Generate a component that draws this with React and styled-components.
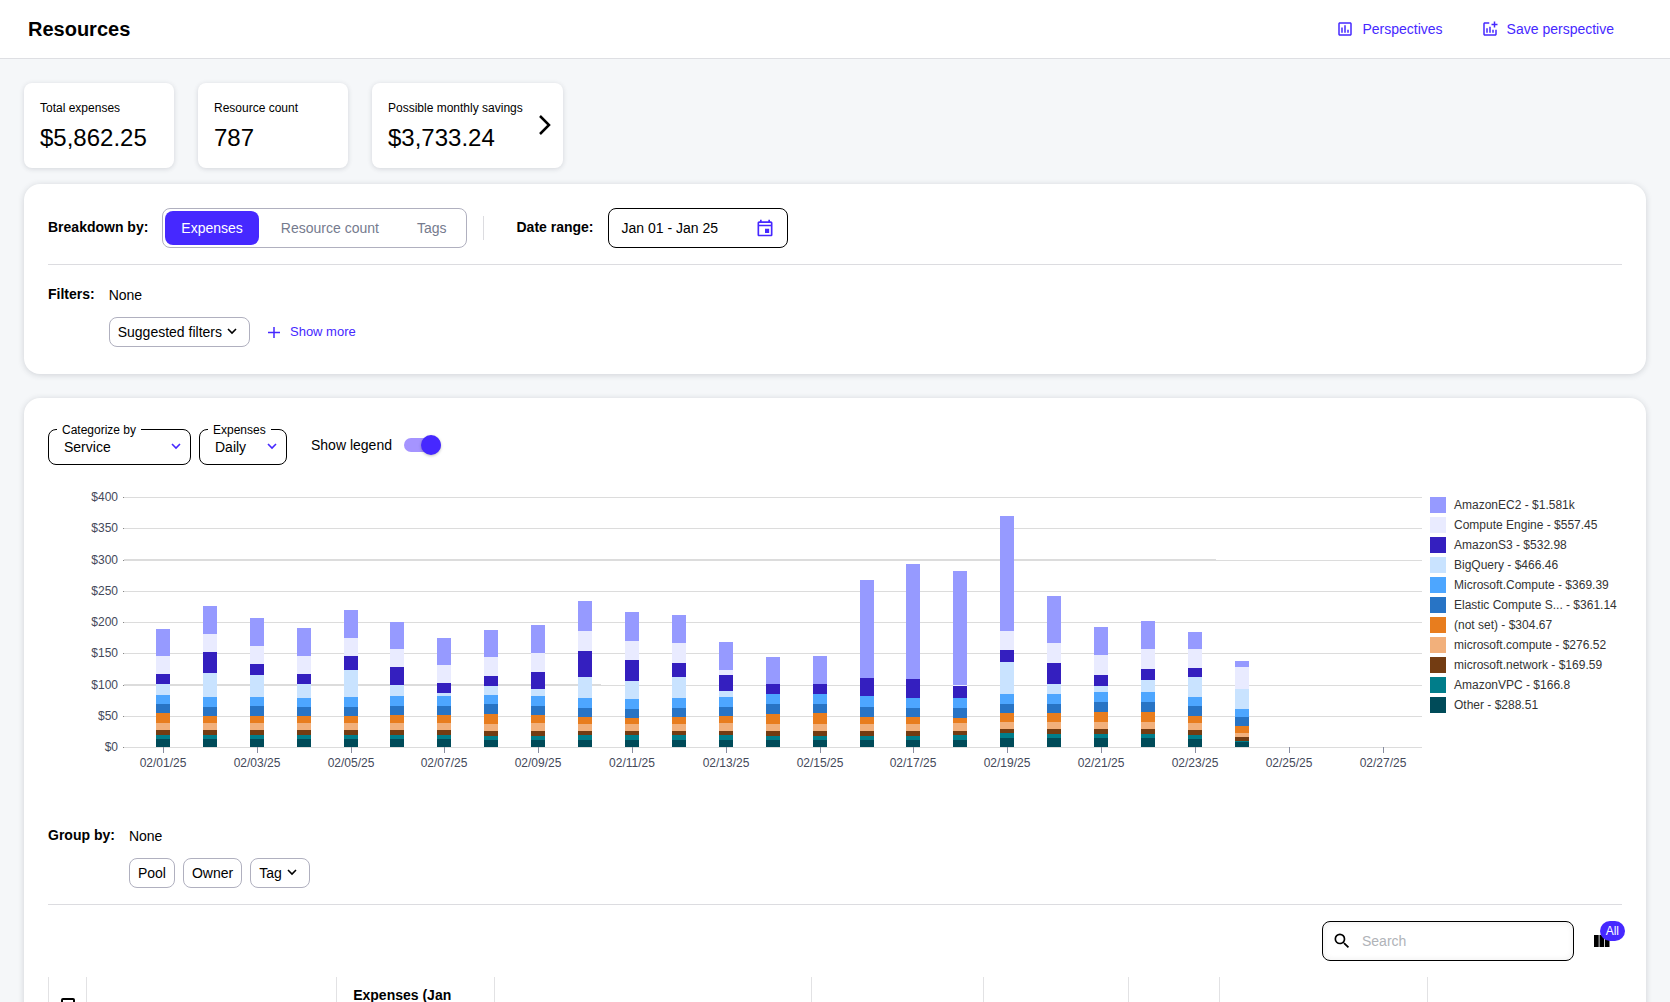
import React, { useLayoutEffect, useRef, useState } from 'react';
import styled, { createGlobalStyle } from 'styled-components';

const ACCENT = '#4628ff';
const LINE = '#dcdce0';

const GlobalStyle = createGlobalStyle`
  * { box-sizing: border-box; }
  body {
    margin: 0;
    background: #f5f7f9;
    color: #000;
    font-family: "Liberation Sans", Arial, sans-serif;
    font-size: 14px;
    line-height: 20px;
    overflow: hidden;
  }
  button, input, select { font: inherit; color: inherit; }
  button { cursor: pointer; }
`;

const Header = styled.header`
  display: flex;
  align-items: center;
  justify-content: space-between;
  height: 59px;
  padding: 0 56px 0 28px;
  background: #fff;
  border-bottom: 1px solid #dedfe3;
`;

const Title = styled.h1`
  margin: 0;
  font-size: 20px;
  line-height: 24px;
`;

const HeaderActions = styled.nav`
  display: flex;
  gap: 38px;
`;

const TextButton = styled.button`
  display: inline-flex;
  align-items: center;
  gap: 8px;
  padding: 0;
  border: 0;
  background: none;
  color: ${ACCENT};
  font-size: ${({ $small }) => ($small ? 13 : 14)}px;
`;

const Icon = styled.svg`
  display: block;
  flex: none;
  width: ${({ $size }) => $size || 18}px;
  height: ${({ $size }) => $size || 18}px;
  fill: currentColor;
`;

const Main = styled.main`
  padding: 24px;
`;

const Summary = styled.section`
  display: flex;
  gap: 24px;
  margin-bottom: 16px;
`;

const SummaryCard = styled.div`
  display: flex;
  align-items: center;
  justify-content: space-between;
  min-width: 150px;
  height: 85px;
  padding: 0 6px 0 16px;
  border-radius: 8px;
  background: #fff;
  box-shadow: 0 1px 5px rgba(40, 44, 60, 0.16);
`;

const SummaryLabel = styled.div`
  font-size: 12px;
  line-height: 16px;
`;

const SummaryValue = styled.div`
  margin-top: 8px;
  font-size: 24px;
  line-height: 28px;
`;

const CardLink = styled.a`
  display: block;
  margin-left: 10px;
  color: #000;
`;

const Panel = styled.section`
  padding: 24px;
  margin-bottom: 24px;
  border-radius: 16px;
  background: #fff;
  box-shadow: 0 1px 6px rgba(40, 44, 60, 0.18);
`;

const FilterPanel = styled(Panel)`
  padding-bottom: 27px;
`;

const Row = styled.div`
  display: flex;
  align-items: ${({ $align }) => $align || 'center'};
  gap: ${({ $gap }) => $gap || 0}px;
`;

const Label = styled.span`
  display: block;
  padding-bottom: 2px;
  font-weight: 700;
  line-height: 18px;
`;

const Toggle = styled.div`
  display: flex;
  gap: 6px;
  height: 40px;
  padding: 2px 4px 2px 2px;
  margin-left: 14px;
  border: 1px solid #b0b0bf;
  border-radius: 8px;
`;

const ToggleButton = styled.button`
  padding: 0 16px;
  border: 0;
  border-radius: 8px;
  background: ${({ $active }) => ($active ? ACCENT : 'transparent')};
  color: ${({ $active }) => ($active ? '#fff' : '#757b8e')};
`;

const VerticalRule = styled.span`
  width: 1px;
  height: 24px;
  margin: 0 32px 0 16px;
  background: ${LINE};
`;

const DateButton = styled.button`
  display: flex;
  align-items: center;
  justify-content: space-between;
  width: 180px;
  height: 40px;
  padding: 0 12px 0 13px;
  margin-left: 14px;
  border: 1px solid #000;
  border-radius: 8px;
  background: #fff;
  svg { color: ${ACCENT}; }
`;

const Rule = styled.hr`
  height: 1px;
  margin: 16px 0;
  border: 0;
  background: ${LINE};
`;

const Stack = styled.div`
  display: flex;
  flex-direction: column;
  gap: 12px;
  padding-top: 4px;
`;

const Chip = styled.button`
  display: inline-flex;
  align-items: center;
  gap: 4px;
  height: 30px;
  padding: 0 8px;
  border: 1px solid #b0b0bf;
  border-radius: 8px;
  background: #fff;
  svg { margin-right: 3px; }
`;

const ChartPanel = styled(Panel)`
  padding-top: 27px;
`;

const Controls = styled(Row)`
  height: 40px;
`;

const Field = styled.fieldset`
  position: relative;
  width: ${({ $width }) => $width}px;
  height: 39px;
  min-width: 0;
  margin: 0;
  padding: 0;
  border: 1px solid #000;
  border-radius: 8px;
`;

const Legend = styled.legend`
  margin-left: 8px;
  padding: 0 5px;
  font-size: 12px;
  line-height: 8px;
`;

const Select = styled.select`
  display: block;
  width: 100%;
  height: 26px;
  padding: 0 15px;
  border: 0;
  background: transparent;
  appearance: none;
`;

const SelectArrow = styled.span`
  position: absolute;
  right: 8px;
  bottom: 11px;
  color: ${ACCENT};
  pointer-events: none;
`;

const SwitchLabel = styled.label`
  display: flex;
  align-items: center;
  gap: 12px;
  margin-left: 16px;
`;

const Switch = styled.input`
  appearance: none;
  display: flex;
  align-items: center;
  justify-content: flex-end;
  width: 37px;
  height: 14px;
  margin: 0;
  border-radius: 7px;
  background: #a594ff;
  &::before {
    content: "";
    width: 20px;
    height: 20px;
    border-radius: 50%;
    background: ${ACCENT};
    box-shadow: 0 1px 3px rgba(0, 0, 0, 0.25);
  }
`;

const ChartRow = styled.div`
  display: flex;
  gap: 8px;
  margin-top: 25px;
`;

const Plot = styled.div`
  flex: 1;
  min-width: 0;
  height: 332px;
  svg { display: block; font-size: 12px; }
  text { fill: #44495a; }
`;

const LegendList = styled.ul`
  width: 192px;
  margin: 7px 0 0;
  padding: 0;
  list-style: none;
  color: #333;
  font-size: 12px;
  line-height: 16px;
`;

const LegendItem = styled.li`
  display: flex;
  gap: 8px;
  margin-bottom: 4px;
  &::before {
    content: "";
    width: 16px;
    height: 16px;
    background: ${({ $color }) => $color};
  }
`;

const Toolbar = styled.div`
  display: flex;
  align-items: center;
  justify-content: flex-end;
  gap: 20px;
  height: 40px;
  margin-bottom: 16px;
`;

const SearchBox = styled.label`
  display: flex;
  align-items: center;
  gap: 10px;
  width: 252px;
  height: 40px;
  padding: 0 9px;
  border: 1px solid #000;
  border-radius: 8px;
  box-shadow: inset 0 0 6px rgba(0, 0, 0, 0.08);
`;

const SearchInput = styled.input`
  flex: 1;
  min-width: 0;
  padding: 0;
  border: 0;
  outline: 0;
  background: transparent;
  &::placeholder { color: #b0b3b8; opacity: 1; }
`;

const ColumnsButton = styled.button`
  position: relative;
  width: 28px;
  height: 40px;
  padding: 0;
  border: 0;
  background: none;
`;

const Badge = styled.span`
  position: absolute;
  top: 0;
  right: -3px;
  padding: 0 6px;
  border-radius: 10px;
  background: ${ACCENT};
  color: #fff;
  font-size: 12px;
`;

const Table = styled.table`
  width: 100%;
  table-layout: fixed;
  border-collapse: collapse;
`;

const HeadCell = styled.th`
  width: ${({ $width }) => $width || 'auto'};
  height: 56px;
  padding: 0 16px;
  border-left: 1px solid #e2e2e4;
  text-align: left;
  font-size: 14px;
`;

const CheckCell = styled(HeadCell)`
  padding: 0 12px;
`;

const CheckBox = styled.input`
  appearance: none;
  display: block;
  width: 14px;
  height: 14px;
  margin: 0;
  border: 2px solid #000;
  border-radius: 2px;
`;

const SERIES = [
  { name: 'Other - $288.51', color: '#004b59' },
  { name: 'AmazonVPC - $166.8', color: '#007d8a' },
  { name: 'microsoft.network - $169.59', color: '#733c12' },
  { name: 'microsoft.compute - $276.52', color: '#f2b07b' },
  { name: '(not set) - $304.67', color: '#e87d1e' },
  { name: 'Elastic Compute S... - $361.14', color: '#2874c5' },
  { name: 'Microsoft.Compute - $369.39', color: '#4da6ff' },
  { name: 'BigQuery - $466.46', color: '#c9e3ff' },
  { name: 'AmazonS3 - $532.98', color: '#341fbf' },
  { name: 'Compute Engine - $557.45', color: '#e9ebff' },
  { name: 'AmazonEC2 - $1.581k', color: '#969aff' },
];

// Running totals of each day's stack, bottom to top, in plot units (1 unit = $1.60).
const DAYS = [
  [8, 12, 17, 24, 34, 43, 52, 63, 73, 91, 118],
  [8, 12, 17, 24, 31, 40, 50, 74, 95, 113, 141],
  [8, 12, 17, 24, 31, 41, 50, 72, 83, 101, 129],
  [8, 12, 17, 24, 31, 40, 49, 63, 73, 91, 119],
  [8, 12, 17, 24, 31, 40, 50, 77, 91, 109, 137],
  [8, 12, 17, 24, 32, 41, 51, 62, 80, 98, 125],
  [8, 12, 17, 24, 32, 41, 51, 54, 64, 82, 109],
  [7, 11, 16, 23, 33, 43, 52, 61, 71, 90, 117],
  [7, 11, 16, 24, 32, 41, 51, 58, 75, 94, 122],
  [7, 12, 16, 23, 30, 39, 49, 70, 96, 116, 146],
  [7, 12, 16, 23, 29, 38, 48, 66, 87, 106, 135],
  [7, 12, 16, 23, 30, 39, 49, 70, 84, 104, 132],
  [7, 12, 16, 24, 31, 40, 50, 56, 72, 77, 105],
  [7, 11, 16, 23, 33, 43, 53, 53, 63, 63, 90],
  [7, 11, 16, 23, 34, 43, 53, 53, 63, 63, 91],
  [7, 11, 16, 23, 30, 40, 51, 51, 69, 69, 167],
  [7, 11, 16, 23, 30, 39, 49, 49, 68, 68, 183],
  [7, 12, 16, 24, 29, 39, 49, 49, 61, 62, 176],
  [9, 14, 18, 25, 34, 43, 53, 85, 97, 116, 231],
  [9, 13, 18, 25, 34, 43, 53, 63, 84, 104, 151],
  [9, 13, 18, 25, 35, 45, 55, 61, 72, 92, 120],
  [9, 13, 18, 25, 35, 45, 55, 67, 78, 98, 126],
  [8, 12, 17, 24, 31, 41, 50, 70, 79, 98, 115],
  [5, 6, 10, 14, 21, 30, 38, 58, 58, 80, 86],
];

const TICKS = [400, 350, 300, 250, 200, 150, 100, 50, 0];
const BASE = 257;
const PLOT_LEFT = 76;

function ExpensesChart() {
  const box = useRef(null);
  const [width, setWidth] = useState(1374);

  useLayoutEffect(() => {
    const measure = () => setWidth(Math.floor(box.current.clientWidth));
    measure();
    const observer = new ResizeObserver(measure);
    observer.observe(box.current);
    return () => observer.disconnect();
  }, []);

  const band = (width - PLOT_LEFT) / 27.67;
  const center = (day) => Math.round(PLOT_LEFT + band * (0.83 + day));

  return (
    <Plot ref={box}>
      <svg width={width} height="290" role="img" aria-label="Daily expenses by service" shapeRendering="crispEdges">
        {TICKS.map((value) => {
          const y = BASE - Math.ceil(value * 0.625 - 0.5);
          const thick = value === 300 ? width - 206 : value === 100 ? 553 : 0;
          return (
            <g key={value}>
              <rect x={PLOT_LEFT} y={y} width={width - PLOT_LEFT} height="1" fill="#dcdcdc" />
              {thick > 0 && (
                <rect x={PLOT_LEFT} y={y - 1} width={thick - PLOT_LEFT} height="1" fill="#dcdcdc" />
              )}
              <rect x={PLOT_LEFT - 1} y={y} width="1" height="1" fill="#888" />
              <text x={PLOT_LEFT - 6} y={y + 4} textAnchor="end">{`$${value}`}</text>
            </g>
          );
        })}
        {DAYS.map((stack, day) =>
          stack.map((top, i) => {
            const bottom = i ? stack[i - 1] : 0;
            return (
              <rect
                key={`${day}-${i}`}
                x={center(day) - 7}
                y={BASE - top}
                width="14"
                height={top - bottom}
                fill={SERIES[i].color}
              />
            );
          })
        )}
        {Array.from({ length: 14 }, (_, i) => i * 2).map((day) => (
          <g key={day}>
            <rect x={center(day)} y={BASE} width="1" height="6" fill="#888da0" />
            <text x={center(day)} y={BASE + 20} textAnchor="middle">
              {`02/${String(day + 1).padStart(2, '0')}/25`}
            </text>
          </g>
        ))}
      </svg>
    </Plot>
  );
}

const Chevron = () => (
  <Icon $size={12} viewBox="0 0 12 12" aria-hidden="true">
    <path d="M2 3l4 4 4-4" fill="none" stroke="currentColor" strokeWidth="1.6" />
  </Icon>
);

export default function App() {
  const [mode, setMode] = useState('Expenses');
  return (
    <>
      <GlobalStyle />
      <Header>
        <Title>Resources</Title>
        <HeaderActions>
          <TextButton>
            <Icon viewBox="0 0 24 24" aria-hidden="true">
              <path d="M9 17H7v-7h2v7zm4 0h-2V7h2v10zm4 0h-2v-4h2v4zm2 2H5V5h14v14zm0-16H5c-1.100 0-2 .9-2 2v14c0 1.100.9 2 2 2h14c1.100 0 2-.9 2-2V5c0-1.100-.9-2-2-2z" />
            </Icon>
            Perspectives
          </TextButton>
          <TextButton>
            <Icon viewBox="0 0 24 24" aria-hidden="true">
              <path d="M22 5v2h-3v3h-2V7h-3V5h3V2h2v3h3zm-3 14H5V5h6V3H5c-1.100 0-2 .9-2 2v14c0 1.100.9 2 2 2h14c1.100 0 2-.9 2-2v-6h-2v6zm-4-6v4h2v-4h-2zm-4 4h2V9h-2v8zm-2 0v-6H7v6h2z" />
            </Icon>
            Save perspective
          </TextButton>
        </HeaderActions>
      </Header>
      <Main>
        <Summary>
          <SummaryCard>
            <div>
              <SummaryLabel>Total expenses</SummaryLabel>
              <SummaryValue>$5,862.25</SummaryValue>
            </div>
          </SummaryCard>
          <SummaryCard>
            <div>
              <SummaryLabel>Resource count</SummaryLabel>
              <SummaryValue>787</SummaryValue>
            </div>
          </SummaryCard>
          <SummaryCard>
            <div>
              <SummaryLabel>Possible monthly savings</SummaryLabel>
              <SummaryValue>$3,733.24</SummaryValue>
            </div>
            <CardLink href="#savings" aria-label="Possible monthly savings details">
              <Icon $size={24} viewBox="0 0 24 24" aria-hidden="true">
                <path d="M7 2l9 9-9 9" fill="none" stroke="currentColor" strokeWidth="2.500" />
              </Icon>
            </CardLink>
          </SummaryCard>
        </Summary>

        <FilterPanel>
          <Row>
            <Label>Breakdown by:</Label>
            <Toggle>
              {['Expenses', 'Resource count', 'Tags'].map((name) => (
                <ToggleButton
                  key={name}
                  $active={mode === name}
                  aria-pressed={mode === name}
                  onClick={() => setMode(name)}
                >
                  {name}
                </ToggleButton>
              ))}
            </Toggle>
            <VerticalRule />
            <Label id="range">Date range:</Label>
            <DateButton aria-describedby="range">
              Jan 01 - Jan 25
              <Icon $size={20} viewBox="0 0 24 24" aria-hidden="true">
                <path d="M19 4h-1V2h-2v2H8V2H6v2H5c-1.110 0-1.990.9-1.990 2L3 20c0 1.100.89 2 2 2h14c1.100 0 2-.9 2-2V6c0-1.100-.9-2-2-2zm0 16H5V10h14v10zm0-12H5V6h14v2zm-7 5h5v5h-5v-5z" />
              </Icon>
            </DateButton>
          </Row>
          <Rule />
          <Row $align="flex-start" $gap={14}>
            <Stack><Label>Filters:</Label></Stack>
            <Stack>
              <span>None</span>
              <Row $gap={16}>
                <Chip>Suggested filters<Chevron /></Chip>
                <TextButton $small>
                  <Icon $size={16} viewBox="0 0 16 16" aria-hidden="true">
                    <path d="M8 3v11M2 8.500h12" fill="none" stroke="currentColor" strokeWidth="1.500" />
                  </Icon>
                  Show more
                </TextButton>
              </Row>
            </Stack>
          </Row>
        </FilterPanel>

        <ChartPanel>
          <Controls $gap={8}>
            <Field $width={143}>
              <Legend>Categorize by</Legend>
              <Select aria-label="Categorize by"><option>Service</option></Select>
              <SelectArrow><Chevron /></SelectArrow>
            </Field>
            <Field $width={88}>
              <Legend>Expenses</Legend>
              <Select aria-label="Expenses"><option>Daily</option></Select>
              <SelectArrow><Chevron /></SelectArrow>
            </Field>
            <SwitchLabel>
              Show legend
              <Switch type="checkbox" role="switch" defaultChecked />
            </SwitchLabel>
          </Controls>
          <ChartRow>
            <ExpensesChart />
            <LegendList>
              {[...SERIES].reverse().map((item) => (
                <LegendItem key={item.name} $color={item.color}>{item.name}</LegendItem>
              ))}
            </LegendList>
          </ChartRow>
          <Row $align="flex-start" $gap={14}>
            <Stack><Label>Group by:</Label></Stack>
            <Stack>
              <span>None</span>
              <Row $gap={8}>
                <Chip>Pool</Chip>
                <Chip>Owner</Chip>
                <Chip>Tag<Chevron /></Chip>
              </Row>
            </Stack>
          </Row>
          <Rule />
          <Toolbar>
            <SearchBox>
              <Icon viewBox="0 0 24 24" $size={20} aria-hidden="true">
                <path d="M15.500 14h-.79l-.28-.27A6.471 6.471 0 0 0 16 9.500 6.500 6.500 0 1 0 9.500 16c1.610 0 3.090-.59 4.230-1.570l.27.28v.79l5 4.990L20.490 19l-4.990-5zm-6 0C7.010 14 5 11.990 5 9.500S7.010 5 9.500 5 14 7.010 14 9.500 11.990 14 9.500 14z" />
              </Icon>
              <SearchInput placeholder="Search" aria-label="Search" />
            </SearchBox>
            <ColumnsButton aria-label="Columns">
              <Icon $size={16} viewBox="0 0 16 16" aria-hidden="true">
                <path d="M0 2h4.700v12H0zM5.500 2h4.500v12H5.500zM10.800 2h4.700v12h-4.700z" />
              </Icon>
              <Badge>All</Badge>
            </ColumnsButton>
          </Toolbar>
          <Table>
            <thead>
              <tr>
                <CheckCell $width="38px"><CheckBox type="checkbox" aria-label="Select all" /></CheckCell>
                <HeadCell $width="15.9%" />
                <HeadCell $width="10%">Expenses (Jan<br />01 - Jan 25)</HeadCell>
                <HeadCell $width="20.2%" />
                <HeadCell $width="10.9%" />
                <HeadCell $width="9.2%" />
                <HeadCell $width="5.8%" />
                <HeadCell $width="13.2%" />
                <HeadCell />
              </tr>
            </thead>
          </Table>
        </ChartPanel>
      </Main>
    </>
  );
}
